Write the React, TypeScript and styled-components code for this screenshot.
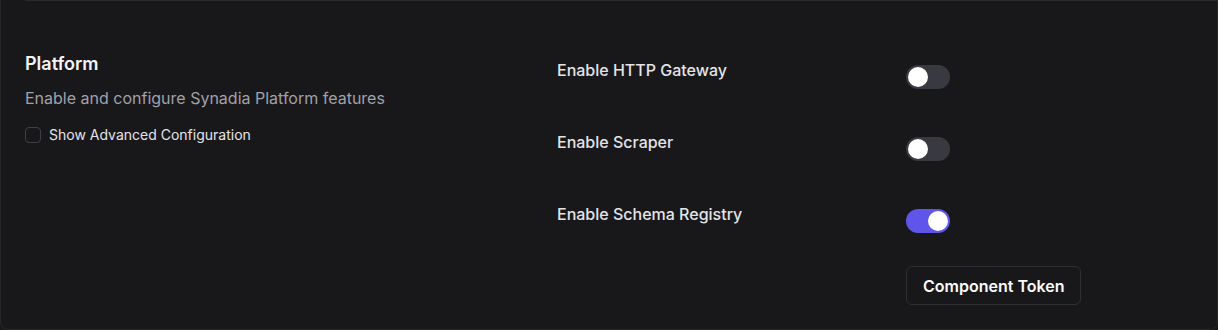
import React from 'react';
import styled, {createGlobalStyle} from 'styled-components';

const GlobalStyle = createGlobalStyle`
  html, body {
    margin: 0;
    padding: 0;
    background: #18181b;
  }
  body {
    font-family: Inter, "Noto Sans", sans-serif;
    -webkit-font-smoothing: antialiased;
  }
`;

const toggles = [
  {label: 'Enable HTTP Gateway', on: false},
  {label: 'Enable Scraper', on: false},
  {label: 'Enable Schema Registry', on: true},
];

const App: React.FC = () => {
  return (
    <>
      <GlobalStyle />
      <Card>
        <Divider />
        <Section>
          <Intro>
            <Title>Platform</Title>
            <Description>Enable and configure Synadia Platform features</Description>
            <CheckRow>
              <CheckBox type="checkbox" />
              <CheckLabel>Show Advanced Configuration</CheckLabel>
            </CheckRow>
          </Intro>
          <Fields>
            {toggles.map(item => (
              <FieldRow key={item.label}>
                <FieldLabel>{item.label}</FieldLabel>
                <Switch $on={item.on} role="switch" aria-checked={item.on}>
                  <Knob />
                </Switch>
              </FieldRow>
            ))}
            <ButtonRow>
              <span />
              <TokenButton>Component Token</TokenButton>
            </ButtonRow>
          </Fields>
        </Section>
      </Card>
    </>
  );
};
export default App;

const Card = styled.div`
  box-sizing: border-box;
  width: 1218px;
  height: 330px;
  background: #18181b;
  border: 1px solid #27272a;
  border-top: none;
  border-radius: 0 0 8px 8px;
`;

const Divider = styled.div`
  height: 1px;
  margin-left: 24px;
  background: #2a2a2e;
`;

const Section = styled.div`
  display: grid;
  grid-template-columns: 532px 1fr;
  padding: 52px 24px 0 24px;
`;

const Intro = styled.div`
  display: flex;
  flex-direction: column;
`;

const Title = styled.h3`
  margin: 0;
  font-size: 18px;
  line-height: 22px;
  font-weight: 600;
  color: #f4f4f5;
`;

const Description = styled.p`
  margin: 12px 0 0;
  font-size: 16px;
  line-height: 22px;
  color: #a1a1aa;
`;

const CheckRow = styled.label`
  display: flex;
  align-items: center;
  gap: 8px;
  margin-top: 17px;
`;

const CheckBox = styled.input`
  appearance: none;
  margin: 0;
  width: 16px;
  height: 16px;
  border: 1px solid #3f3f46;
  border-radius: 4px;
  background: transparent;
`;

const CheckLabel = styled.span`
  font-size: 14px;
  line-height: 18px;
  font-weight: 400;
  color: #e4e4e7;
`;

const Fields = styled.div`
  display: flex;
  flex-direction: column;
  gap: 36px;
  padding-top: 7px;
`;

const FieldRow = styled.div`
  display: grid;
  grid-template-columns: 349px auto;
  align-items: start;
  height: 36px;
`;

const ButtonRow = styled(FieldRow)`
  margin-top: -10px;
  height: auto;
`;

const FieldLabel = styled.span`
  font-size: 16px;
  line-height: 20px;
  font-weight: 500;
  color: #e4e4e7;
`;

const Switch = styled.div<{$on: boolean}>`
  box-sizing: border-box;
  width: 44px;
  height: 24px;
  margin-top: 5px;
  padding: 2px;
  border-radius: 12px;
  display: flex;
  justify-content: ${p => (p.$on ? 'flex-end' : 'flex-start')};
  background: ${p => (p.$on ? '#5f55e9' : '#393941')};
`;

const Knob = styled.div`
  width: 20px;
  height: 20px;
  border-radius: 50%;
  background: #ffffff;
`;

const TokenButton = styled.button`
  justify-self: start;
  box-sizing: border-box;
  height: 39px;
  padding: 0 16px;
  border: 1px solid #2e2e33;
  border-radius: 6px;
  background: #18181b;
  color: #fafafa;
  font-family: Inter, "Noto Sans", sans-serif;
  font-size: 16px;
  font-weight: 600;
`;
